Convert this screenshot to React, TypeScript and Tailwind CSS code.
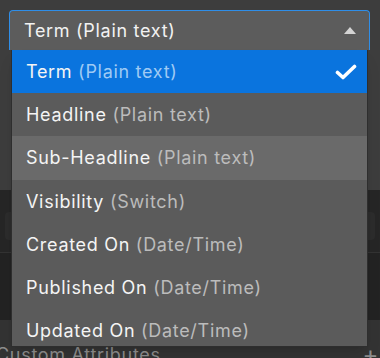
type Option = {
	label: string
	kind: string
}

const options: Option[] = [
	{ label: 'Term', kind: 'Plain text' },
	{ label: 'Headline', kind: 'Plain text' },
	{ label: 'Sub-Headline', kind: 'Plain text' },
	{ label: 'Visibility', kind: 'Switch' },
	{ label: 'Created On', kind: 'Date/Time' },
	{ label: 'Published On', kind: 'Date/Time' },
	{ label: 'Updated On', kind: 'Date/Time' }
]

export default function App() {
	const selected = 0
	const hovered = 2

	return (
		<div className="relative w-[380px] h-[358px] overflow-hidden bg-[#3d3d3d] font-['Inter',sans-serif] text-[18px] tracking-[0.7px]">
			{/* panel behind the open menu */}
			<div className="flex flex-col h-full">
				<div className="h-[190px] bg-[#3d3d3d]" />
				<div className="flex flex-col h-[130px] bg-[#262626]">
					<div className="h-[28px] mx-[5px] mt-[22px] rounded bg-[#2c2c2c]" />
					<div className="h-[12px]" />
					<div className="flex-1 border-t border-[#333] bg-[#232323]" />
				</div>
				<div className="flex items-end justify-between flex-1 bg-[#333333]">
					<span className="-ml-[4px] text-[#8d8d8d] leading-none translate-y-[6px]">Custom Attributes</span>
					<span className="mr-[1px] text-[#8d8d8d] text-[24px] leading-none translate-y-[9px]">+</span>
				</div>
			</div>

			{/* select + open listbox */}
			<div className="absolute left-[9px] top-[10px] w-[361px]">
				<button className="flex items-center justify-between w-full h-[40px] pl-[14px] pr-[13px] rounded-t-[4px] border border-b-0 border-[#2f8ee8] bg-[#5c5c5c] text-[#f2f2f2]">
					<span>Term (Plain text)</span>
					<svg width="12" height="7" viewBox="0 0 12 7">
						<path d="M6 0 L12 7 L0 7 Z" fill="#d4d4d4" />
					</svg>
				</button>
				<ul className="mx-[2px] h-[297px] overflow-hidden border border-t-0 border-[#2e2e2e] bg-[#5b5b5b] shadow-lg">
					{options.map((o, i) => {
						const isSel = i === selected
						const isHover = i === hovered
						return (
							<li
								key={o.label}
								className={`flex items-center justify-between h-[43.2px] pl-[14px] pr-[10px] ${
									isSel ? 'bg-[#0a74de]' : isHover ? 'bg-[#6a6a6a]' : ''
								}`}
							>
								<span className="text-[#f4f4f4]">
									{o.label}{' '}
									<span className={isSel ? 'text-[#9fcaf4]' : 'text-[#bcbcbc]'}>({o.kind})</span>
								</span>
								{isSel && (
									<svg width="22" height="16" viewBox="0 0 22 16" fill="none">
										<path d="M2.5 8.5 L8 13.5 L19.5 2.5" stroke="white" strokeWidth="3.6" strokeLinecap="round" strokeLinejoin="round" />
									</svg>
								)}
							</li>
						)
					})}
				</ul>
			</div>
		</div>
	)
}
